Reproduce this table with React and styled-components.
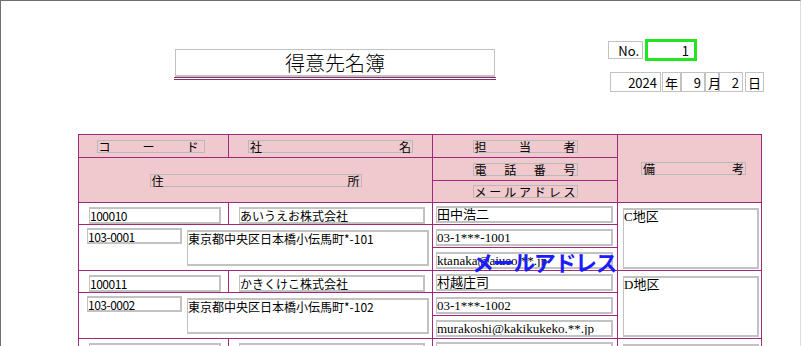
import React from 'react';
import styled, { createGlobalStyle } from 'styled-components';

const GlobalStyle = createGlobalStyle`
    body {
        margin: 0;
        background: #ffffff;
        font-family: 'Noto Sans CJK JP', 'Liberation Sans', sans-serif;
        color: #000000;
    }
`;

const LINE = '#a0297c';
const PINK = '#efc9cd';
const GRAY = '#c2c2c2';

const fonts = {
    sans: `'Noto Sans CJK JP', 'Liberation Sans', sans-serif`,
    serif: `'Liberation Serif', 'Noto Sans CJK JP', serif`,
};

const Page = styled.div`
    position: relative;
    width: 801px;
    height: 346px;
    box-sizing: border-box;
    border-top: 1px solid #707070;
    border-left: 1px solid #707070;
    border-right: 1px solid #dddddd;
    overflow: hidden;
`;

const TopBar = styled.div`
    display: flex;
    align-items: flex-start;
    height: 133px;
`;

const TitleBlock = styled.div`
    margin: 48px 0 0 173px;
    width: 322px;
    border-bottom: 3px double #8a2c6c;
`;

const TitleBox = styled.div`
    margin: 0 1px;
    height: 28px;
    box-sizing: border-box;
    border: 1px solid ${GRAY};
    border-bottom-width: 2px;
    font-size: 20px;
    font-weight: 300;
    line-height: 25px;
    text-align: center;
`;

const Meta = styled.div`
    margin: 38px 0 0 112px;
    display: flex;
    flex-direction: column;
`;

const NoRow = styled.div`
    display: flex;
    align-items: center;
    gap: 2px;
`;

const Box = styled.div`
    width: ${({ $w }) => $w}px;
    height: ${({ $h }) => $h || 20}px;
    margin-left: ${({ $gap }) => $gap || 0}px;
    box-sizing: border-box;
    border: 1px solid ${GRAY};
    display: flex;
    align-items: center;
    justify-content: ${({ $left }) => ($left ? 'flex-start' : 'flex-end')};
    padding: 0 3px 0 2px;
    font-size: 13px;
    line-height: 1;
`;

const NoValue = styled.div`
    width: 52px;
    height: 22px;
    box-sizing: border-box;
    border: 3px solid #1fe61f;
    display: flex;
    align-items: center;
    justify-content: flex-end;
    padding-right: 5px;
    font-size: 13px;
`;

const DateRow = styled.div`
    display: flex;
    margin: 11px 0 0 2px;
`;

const Table = styled.div`
    margin-left: 77px;
    width: 684px;
    box-sizing: border-box;
    padding: 1px;
    background: ${LINE};
    display: flex;
    flex-direction: column;
    gap: 1px;
`;

const Band = styled.div`
    display: grid;
    grid-template-columns: 149px 203px 184px 143px;
    grid-template-rows: ${({ $rows }) => $rows};
    gap: 1px;
`;

const Cell = styled.div`
    grid-column: ${({ $col }) => $col};
    grid-row: ${({ $row }) => $row};
    background: ${({ $head }) => ($head ? PINK : '#ffffff')};
    display: flex;
    align-items: ${({ $head }) => ($head ? 'center' : 'flex-start')};
    justify-content: ${({ $head }) => ($head ? 'center' : 'flex-start')};
    padding: ${({ $pad }) => $pad || '0'};
    gap: 5px;
    min-width: 0;
`;

const Label = styled.div`
    width: ${({ $w }) => $w}px;
    height: 13px;
    box-sizing: border-box;
    border: 1px solid #b9b9b9;
    display: flex;
    justify-content: space-between;
    padding: 0 ${({ $pr }) => $pr || 1}px 0 1px;
    font-size: 12px;
    line-height: 11px;
    margin-left: ${({ $shift }) => $shift || 0}px;
`;

const Field = styled.div`
    flex: ${({ $w }) => ($w ? `0 0 ${$w}px` : '1')};
    height: ${({ $h }) => ($h ? `${$h}px` : 'auto')};
    align-self: stretch;
    margin-top: ${({ $top }) => $top || 0}px;
    box-sizing: border-box;
    border: 1px solid ${GRAY};
    border-width: 2px 2px 2px 1px;
    background: #ffffff;
    font-family: ${({ $font }) => fonts[$font || 'sans']};
    font-size: ${({ $font }) => ($font === 'serif' ? 13 : 12)}px;
    letter-spacing: ${({ $tight }) => ($tight ? '-0.5px' : '0')};
    line-height: 13px;
    white-space: nowrap;
    overflow: hidden;
`;

// dragged field caption floating over the grid
const DragLabel = styled.div`
    position: absolute;
    left: 471px;
    top: 247px;
    font-family: 'Noto Sans CJK JP', sans-serif;
    font-weight: 700;
    font-size: 22px;
    line-height: 26px;
    letter-spacing: -1.4px;
    color: #1c1cff;
    pointer-events: none;
`;

const spread = (text) => text.split('').map((c, i) => <span key={i}>{c}</span>);

const records = [
    {
        code: '100010',
        company: 'あいうえお株式会社',
        zip: '103-0001',
        address: '東京都中央区日本橋小伝馬町*-101',
        name: '田中浩二',
        phone: '03-1***-1001',
        email: 'ktanaka@aiueo.**.jp',
        note: 'C地区',
    },
    {
        code: '100011',
        company: 'かきくけこ株式会社',
        zip: '103-0002',
        address: '東京都中央区日本橋小伝馬町*-102',
        name: '村越庄司',
        phone: '03-1***-1002',
        email: 'murakoshi@kakikukeko.**.jp',
        note: 'D地区',
    },
    { code: '', company: '', zip: '', address: '', name: '', phone: '', email: '', note: '' },
];

const Header = () => (
    <Band $rows='22px 22px 21px'>
        <Cell $head $col='1' $row='1'>
            <Label $w={108} $pr={5} $shift={-6}>{spread('コード')}</Label>
        </Cell>
        <Cell $head $col='2' $row='1'>
            <Label $w={165}>{spread('社名')}</Label>
        </Cell>
        <Cell $head $col='1 / span 2' $row='2 / span 2'>
            <Label $w={212}>{spread('住所')}</Label>
        </Cell>
        <Cell $head $col='3' $row='1'>
            <Label $w={105}>{spread('担当者')}</Label>
        </Cell>
        <Cell $head $col='3' $row='2'>
            <Label $w={105}>{spread('電話番号')}</Label>
        </Cell>
        <Cell $head $col='3' $row='3'>
            <Label $w={105}>{spread('メールアドレス')}</Label>
        </Cell>
        <Cell $head $col='4' $row='1 / span 3'>
            <Label $w={105} $shift={8}>{spread('備考')}</Label>
        </Cell>
    </Band>
);

const Record = ({ data }) => (
    <Band $rows='21px 22px 22px'>
        <Cell $col='1' $row='1' $pad='4px 7px 0 10px'>
            <Field $tight>{data.code}</Field>
        </Cell>
        <Cell $col='2' $row='1' $pad='4px 7px 0 10px'>
            <Field>{data.company}</Field>
        </Cell>
        <Cell $col='1 / span 2' $row='2 / span 2' $pad='3px 3px 0 8px'>
            <Field $w={95} $h={16} $tight>{data.zip}</Field>
            <Field $h={36} $top={2}>{data.address}</Field>
        </Cell>
        <Cell $col='3' $row='1' $pad='3px 4px 1px 3px'>
            <Field $font='serif'>{data.name}</Field>
        </Cell>
        <Cell $col='3' $row='2' $pad='4px 4px 1px 3px'>
            <Field $font='serif'>{data.phone}</Field>
        </Cell>
        <Cell $col='3' $row='3' $pad='4px 4px 1px 3px'>
            <Field $font='serif'>{data.email}</Field>
        </Cell>
        <Cell $col='4' $row='1 / span 3' $pad='5px 2px 1px 5px'>
            <Field $font='serif'>{data.note}</Field>
        </Cell>
    </Band>
);

const App = () => (
    <>
        <GlobalStyle />
        <Page>
            <TopBar>
                <TitleBlock>
                    <TitleBox>得意先名簿</TitleBox>
                </TitleBlock>
                <Meta>
                    <NoRow>
                        <Box $w={35} $h={18}>No.</Box>
                        <NoValue>1</NoValue>
                    </NoRow>
                    <DateRow>
                        <Box $w={51}>2024</Box>
                        <Box $w={19} $gap={1} $left>年</Box>
                        <Box $w={24}>9</Box>
                        <Box $w={14} $left>月</Box>
                        <Box $w={24}>2</Box>
                        <Box $w={19} $gap={2} $left>日</Box>
                    </DateRow>
                </Meta>
            </TopBar>
            <Table>
                <Header />
                {records.map((r, i) => (
                    <Record key={i} data={r} />
                ))}
            </Table>
            <DragLabel>メールアドレス</DragLabel>
        </Page>
    </>
);

export default App;
